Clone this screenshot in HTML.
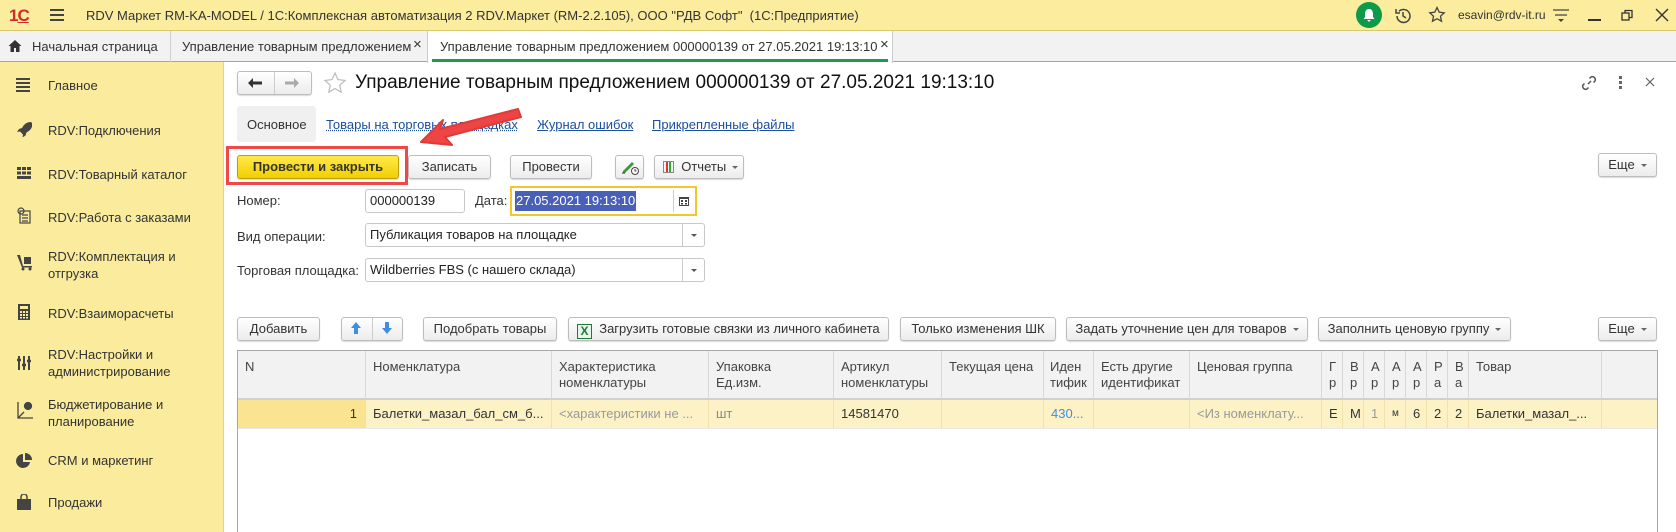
<!DOCTYPE html>
<html><head><meta charset="utf-8"><style>
*{box-sizing:border-box;margin:0;padding:0}
body{width:1676px;height:532px;overflow:hidden;background:#fff;font-family:"Liberation Sans",Arial,sans-serif;font-size:13px;color:#333;position:relative}
.a{position:absolute;white-space:nowrap}
.top{left:0;top:0;width:1676px;height:31px;background:#fbec9e;border-bottom:1px solid #d8c870}
.tabs{left:0;top:31px;width:1676px;height:31px;background:#f2f2f2;border-bottom:1px solid #a5a5a5}
.side{left:0;top:62px;width:224px;height:470px;background:#fbec9d;border-right:1px solid #e3d488}
.si{left:48px;font-size:13px;color:#333;line-height:17px}
.btn{position:absolute;height:24px;border:1px solid #bdbdbd;border-radius:3px;background:linear-gradient(#fff,#ececec);box-shadow:0 1px 1px rgba(0,0,0,.15);font-size:13px;line-height:22px;text-align:center;color:#333;white-space:nowrap}
.lnk{color:#1a4fa0;text-decoration:underline;font-size:13px}
.inp{position:absolute;height:24px;border:1px solid #c8c8c8;border-radius:3px;background:#fff;font-size:13px;line-height:22px;padding-left:4px;color:#222}
.dd{position:absolute;right:0;top:0;width:22px;height:22px;border-left:1px solid #ccc}
.dd:after{content:"";position:absolute;left:8px;top:10px;border:3px solid transparent;border-top:3px solid #555}
.tri{display:inline-block;border:3px solid transparent;border-top:3px solid #666;vertical-align:middle;margin-left:6px;margin-top:3px}
.th{position:absolute;top:351px;height:49px;background:#f2f2f2;border-right:1px solid #d8d8d8;border-bottom:2px solid #d0d0d0;font-size:13px;line-height:16px;padding:8px 0 0 7px;color:#444;overflow:hidden;white-space:nowrap}
.td{position:absolute;top:400px;height:28px;background:#fdf2c6;border-right:1px solid #f0e2a8;font-size:13px;line-height:28px;padding-left:7px;color:#333;overflow:hidden;white-space:nowrap}
</style></head><body>
<div class="a top"></div>
<div class="a" style="left:9px;top:6px;color:#d32b2b;font-weight:bold;font-size:17px;letter-spacing:-1px">1<span style="text-decoration:underline">С</span></div>
<div class="a" style="left:50px;top:9px;width:14px;height:2px;background:#444;box-shadow:0 5px 0 #444,0 10px 0 #444"></div>
<div class="a" style="left:86px;top:8px;font-size:13px;color:#333">RDV Маркет RM-KA-MODEL / 1С:Комплексная автоматизация 2 RDV.Маркет (RM-2.2.105), ООО "РДВ Софт"&nbsp; (1С:Предприятие)</div>
<div class="a" style="left:1356px;top:2px;width:26px;height:26px;border-radius:50%;background:#0e9a48"></div>
<svg class="a" style="left:1361px;top:7px" width="16" height="16" viewBox="0 0 16 16"><path d="M8 2c-3 0-4 2.5-4 5v3l-1.5 2h11L12 10V7c0-2.5-1-5-4-5z M6.5 13h3a1.5 1.5 0 0 1-3 0z" fill="#fff"/></svg>
<svg class="a" style="left:1393px;top:6px" width="20" height="20" viewBox="0 0 20 20" fill="none" stroke="#444" stroke-width="1.5"><path d="M4 10a6.5 6.5 0 1 0 2-4.7"/><path d="M3 3v4h4"/><path d="M10 6v4l3 2"/></svg>
<svg class="a" style="left:1427px;top:5px" width="20" height="20" viewBox="0 0 20 20"><path d="M10 2.5l2.2 4.7 5 .6-3.7 3.4 1 5-4.5-2.5-4.5 2.5 1-5L2.8 7.8l5-.6z" fill="none" stroke="#444" stroke-width="1.3"/></svg>
<div class="a" style="left:1458px;top:8px;font-size:12px;color:#333">esavin@rdv-it.ru</div>
<svg class="a" style="left:1552px;top:7px" width="18" height="18" viewBox="0 0 18 18"><path d="M1 3h16M3 8h12" stroke="#444" stroke-width="1.3"/><path d="M6 12h6l-3 3z" fill="#444"/></svg>
<div class="a" style="left:1588px;top:19px;width:13px;height:1.5px;background:#333"></div>
<svg class="a" style="left:1621px;top:9px" width="13" height="13" viewBox="0 0 13 13" fill="none" stroke="#333" stroke-width="1.3"><rect x="1" y="4" width="7" height="7"/><path d="M4 4V1.5h7v7H8"/></svg>
<svg class="a" style="left:1655px;top:8px" width="14" height="14" viewBox="0 0 14 14" stroke="#333" stroke-width="1.4"><path d="M1 1l12 12M13 1L1 13"/></svg>

<div class="a tabs"></div>
<svg class="a" style="left:8px;top:39px" width="14" height="14" viewBox="0 0 14 14"><path d="M7 1L0.5 7H2.5v6h3.5V9h2v4h3.5V7h2z" fill="#333"/></svg>
<div class="a" style="left:32px;top:39px">Начальная страница</div>
<div class="a" style="left:170px;top:31px;width:1px;height:31px;background:#d0d0d0"></div>
<div class="a" style="left:182px;top:39px">Управление товарным предложением</div>
<div class="a" style="left:413px;top:36px;font-size:15px;color:#333">×</div>
<div class="a" style="left:427px;top:31px;width:466px;height:32px;background:#fff;border-left:1px solid #ccc;border-right:1px solid #ccc"></div>
<div class="a" style="left:432px;top:59px;width:456px;height:3px;background:#1e9a4a"></div>
<div class="a" style="left:440px;top:39px">Управление товарным предложением 000000139 от 27.05.2021 19:13:10</div>
<div class="a" style="left:880px;top:36px;font-size:15px">×</div>

<div class="a side"></div>
<div class="a" style="left:16px;top:78px;width:14px;height:2px;background:#444;box-shadow:0 4px 0 #444,0 8px 0 #444,0 12px 0 #444"></div>
<div class="a si" style="top:77px">Главное</div>
<svg class="a" style="left:16px;top:121px" width="16" height="16" viewBox="0 0 16 16"><path d="M15 1c-4 0-7 2-9 6l-3 1-2 3 3-0.5 3 3-0.5 3 3-2 1-3c4-2 6-5 6-9z" fill="#444"/></svg>
<div class="a si" style="top:122px">RDV:Подключения</div>
<svg class="a" style="left:16px;top:166px" width="16" height="14" viewBox="0 0 16 14" fill="#444"><rect x="1" y="1" width="4" height="3"/><rect x="6" y="1" width="4" height="3"/><rect x="11" y="1" width="4" height="3"/><rect x="1" y="5.5" width="4" height="3"/><rect x="6" y="5.5" width="4" height="3"/><rect x="11" y="5.5" width="4" height="3"/><rect x="1" y="10" width="14" height="3"/></svg>
<div class="a si" style="top:166px">RDV:Товарный каталог</div>
<svg class="a" style="left:17px;top:207px" width="14" height="17" viewBox="0 0 14 17" fill="none" stroke="#444" stroke-width="1.2"><rect x="3" y="4" width="10" height="12"/><circle cx="4" cy="4" r="3"/><path d="M5 8h6M5 11h6M5 14h6"/></svg>
<div class="a si" style="top:209px">RDV:Работа с заказами</div>
<svg class="a" style="left:16px;top:253px" width="18" height="18" viewBox="0 0 18 18" fill="#444"><path d="M1 2l3 0 3 11h9v1.5H6z"/><rect x="8" y="4" width="7" height="7"/><circle cx="7" cy="16" r="1.5"/><circle cx="14" cy="16" r="1.5"/></svg>
<div class="a si" style="top:248px">RDV:Комплектация и<br>отгрузка</div>
<svg class="a" style="left:18px;top:304px" width="12" height="16" viewBox="0 0 12 16" fill="#444"><path d="M0 0h12v16H0z M2 2v3h8V2z" fill-rule="evenodd"/><g fill="#fbec9d"><rect x="2" y="7" width="2" height="2"/><rect x="5" y="7" width="2" height="2"/><rect x="8" y="7" width="2" height="2"/><rect x="2" y="10" width="2" height="2"/><rect x="5" y="10" width="2" height="2"/><rect x="8" y="10" width="2" height="2"/><rect x="2" y="13" width="2" height="1.5"/><rect x="5" y="13" width="2" height="1.5"/><rect x="8" y="13" width="2" height="1.5"/></g></svg>
<div class="a si" style="top:305px">RDV:Взаиморасчеты</div>
<svg class="a" style="left:17px;top:355px" width="14" height="16" viewBox="0 0 14 16" stroke="#444" stroke-width="2"><path d="M2 1v14M7 1v14M12 1v14"/><path d="M0 5h4M5 10h4M10 6h4" stroke-width="2.5"/></svg>
<div class="a si" style="top:346px">RDV:Настройки и<br>администрирование</div>
<svg class="a" style="left:16px;top:400px" width="18" height="20" viewBox="0 0 18 20" fill="none" stroke="#444" stroke-width="1.3"><path d="M2 2v16h15"/><path d="M2 18l6-6"/><circle cx="12" cy="6" r="3.5" fill="#444"/></svg>
<div class="a si" style="top:396px">Бюджетирование и<br>планирование</div>
<svg class="a" style="left:16px;top:453px" width="16" height="16" viewBox="0 0 16 16" fill="#444"><path d="M7 1a7 7 0 1 0 7 8H7z"/><path d="M9 0v7h7a7 7 0 0 0-7-7z"/></svg>
<div class="a si" style="top:452px">CRM и маркетинг</div>
<svg class="a" style="left:17px;top:494px" width="14" height="16" viewBox="0 0 14 16" fill="#444"><path d="M0 5h14v11H0z"/><path d="M4 6V3a3 3 0 0 1 6 0v3" fill="none" stroke="#444" stroke-width="1.5"/></svg>
<div class="a si" style="top:494px">Продажи</div>

<div class="btn" style="left:237px;top:71px;width:75px;height:24px"></div>
<div class="a" style="left:274px;top:72px;width:1px;height:22px;background:#ccc"></div>
<svg class="a" style="left:247px;top:76px" width="16" height="14" viewBox="0 0 16 14"><path d="M1 7l5-5v3.5h9v3H6V12z" fill="#333"/></svg>
<svg class="a" style="left:284px;top:76px" width="16" height="14" viewBox="0 0 16 14"><path d="M15 7l-5-5v3.5H1v3h9V12z" fill="#aaa"/></svg>
<svg class="a" style="left:323px;top:71px" width="24" height="24" viewBox="0 0 24 24"><path d="M12 2l3 6.6 7 .8-5.2 4.8 1.4 7L12 17.6l-6.2 3.6 1.4-7L2 9.4l7-.8z" fill="none" stroke="#bbb" stroke-width="1.2"/></svg>
<div class="a" style="left:355px;top:72px;font-size:19px;color:#111">Управление товарным предложением 000000139 от 27.05.2021 19:13:10</div>
<svg class="a" style="left:1580px;top:74px" width="18" height="18" viewBox="0 0 18 18" fill="none" stroke="#555" stroke-width="1.5"><path d="M8 10l3-3"/><path d="M9.5 4.5l1.5-1.5a3 3 0 0 1 4 4L13.5 8.5"/><path d="M8.5 13.5L7 15a3 3 0 0 1-4-4l1.5-1.5"/></svg>
<div class="a" style="left:1619px;top:76px;width:3px;height:3px;background:#666;box-shadow:0 5px 0 #666,0 10px 0 #666"></div>
<svg class="a" style="left:1645px;top:77px" width="10" height="10" viewBox="0 0 10 10" stroke="#666" stroke-width="1.2"><path d="M1 1l8 8M9 1L1 9"/></svg>

<div class="a" style="left:237px;top:106px;width:79px;height:36px;background:#f0f0f0;border-radius:3px"></div>
<div class="a" style="left:247px;top:117px">Основное</div>
<div class="a lnk" style="left:326px;top:117px;text-decoration:underline dotted">Товары на торговых площадках</div>
<div class="a lnk" style="left:537px;top:117px">Журнал ошибок</div>
<div class="a lnk" style="left:652px;top:117px">Прикрепленные файлы</div>

<div class="a" style="left:226px;top:146px;width:182px;height:39px;border:3px solid #f04848"></div>
<div class="btn" style="left:237px;top:155px;width:162px;background:linear-gradient(#ffe94a,#f1d000);border-color:#bfa000;font-weight:bold;color:#333">Провести и закрыть</div>
<div class="btn" style="left:408px;top:155px;width:83px">Записать</div>
<div class="btn" style="left:510px;top:155px;width:82px">Провести</div>
<div class="btn" style="left:615px;top:155px;width:29px"></div>
<svg class="a" style="left:620px;top:158px" width="20" height="18" viewBox="0 0 20 18"><path d="M3 13l9-9 2 2-9 9H3z" fill="#3a9a3a"/><path d="M2 15h3" stroke="#333"/><circle cx="15" cy="13" r="3.5" fill="#fff" stroke="#444"/><path d="M15 11v2h1.5" stroke="#444" fill="none"/></svg>
<div class="btn" style="left:654px;top:155px;width:90px;text-align:left;padding-left:8px"><span style="display:inline-block;width:11px;height:12px;border:1px solid #888;vertical-align:-2px;background:linear-gradient(90deg,transparent 2px,#d33 2px,#d33 4px,transparent 4px,transparent 5px,#3a3 5px,#3a3 7px,transparent 7px)"></span>&nbsp; Отчеты<span class="tri"></span></div>
<div class="btn" style="left:1598px;top:153px;width:59px">Еще<span class="tri"></span></div>

<div class="a" style="left:237px;top:193px">Номер:</div>
<div class="inp" style="left:365px;top:189px;width:100px">000000139</div>
<div class="a" style="left:475px;top:193px">Дата:</div>
<div class="a" style="left:510px;top:186px;width:187px;height:30px;border:2px solid #f4c62a"></div>
<div class="a" style="left:515px;top:191px;width:121px;height:20px;background:#4860b8"></div>
<div class="a" style="left:516px;top:193px;color:#fff">27.05.2021 19:13:10</div>
<div class="a" style="left:673px;top:190px;width:1px;height:22px;background:#ccc"></div>
<svg class="a" style="left:679px;top:196px" width="10" height="10" viewBox="0 0 10 10" fill="#444"><path d="M0 1h10v9H0z M1 3v6h8V3z" fill-rule="evenodd"/><rect x="2" y="4" width="2" height="2"/><rect x="6" y="4" width="2" height="2"/><rect x="2" y="7" width="2" height="1.5"/><rect x="6" y="7" width="2" height="1.5"/></svg>

<div class="a" style="left:237px;top:229px">Вид операции:</div>
<div class="inp" style="left:365px;top:223px;width:340px">Публикация товаров на площадке<div class="dd"></div></div>
<div class="a" style="left:237px;top:263px">Торговая площадка:</div>
<div class="inp" style="left:365px;top:258px;width:340px">Wildberries FBS (с нашего склада)<div class="dd"></div></div>

<div class="btn" style="left:237px;top:317px;width:83px">Добавить</div>
<div class="btn" style="left:341px;top:317px;width:62px"></div>
<div class="a" style="left:372px;top:318px;width:1px;height:22px;background:#ccc"></div>
<svg class="a" style="left:350px;top:321px" width="12" height="14" viewBox="0 0 12 14"><path d="M6 1L1 7h3v6h4V7h3z" fill="#3f8fe0"/></svg>
<svg class="a" style="left:381px;top:321px" width="12" height="14" viewBox="0 0 12 14"><path d="M6 13L1 7h3V1h4v6h3z" fill="#3f8fe0"/></svg>
<div class="btn" style="left:423px;top:317px;width:134px">Подобрать товары</div>
<div class="btn" style="left:568px;top:317px;width:321px;text-align:left;padding-left:8px"><span style="display:inline-block;width:15px;height:15px;border:1px solid #1f7a3a;background:#e8f5ea;color:#1f7a3a;font-weight:bold;font-size:12px;line-height:13px;text-align:center;vertical-align:-2px">X</span>&nbsp; Загрузить готовые связки из личного кабинета</div>
<div class="btn" style="left:900px;top:317px;width:156px">Только изменения ШК</div>
<div class="btn" style="left:1066px;top:317px;width:242px">Задать уточнение цен для товаров<span class="tri"></span></div>
<div class="btn" style="left:1318px;top:317px;width:193px">Заполнить ценовую группу<span class="tri"></span></div>
<div class="btn" style="left:1598px;top:317px;width:59px">Еще<span class="tri"></span></div>

<div class="a" style="left:237px;top:350px;width:1421px;height:182px;border:1px solid #a8a8a8;border-bottom:none"></div>
<div class="th" style="left:238px;width:128px">N</div>
<div class="th" style="left:366px;width:186px">Номенклатура</div>
<div class="th" style="left:552px;width:157px">Характеристика<br>номенклатуры</div>
<div class="th" style="left:709px;width:125px">Упаковка<br>Ед.изм.</div>
<div class="th" style="left:834px;width:108px">Артикул<br>номенклатуры</div>
<div class="th" style="left:942px;width:102px">Текущая цена</div>
<div class="th" style="left:1044px;width:50px;padding-left:6px">Иден<br>тифик</div>
<div class="th" style="left:1094px;width:96px">Есть другие<br>идентификат</div>
<div class="th" style="left:1190px;width:132px">Ценовая группа</div>
<div class="th" style="left:1322px;width:21px">Г<br>р</div>
<div class="th" style="left:1343px;width:21px">В<br>р</div>
<div class="th" style="left:1364px;width:21px">А<br>р</div>
<div class="th" style="left:1385px;width:21px">А<br>р</div>
<div class="th" style="left:1406px;width:21px">А<br>р</div>
<div class="th" style="left:1427px;width:21px">Р<br>а</div>
<div class="th" style="left:1448px;width:21px">В<br>а</div>
<div class="th" style="left:1469px;width:133px">Товар</div>
<div class="th" style="left:1602px;width:55px;border-right:none"></div>

<div class="td" style="left:238px;width:128px;background:#fbe491;text-align:right;padding-right:8px">1</div>
<div class="td" style="left:366px;width:186px">Балетки_мазал_бал_см_б...</div>
<div class="td" style="left:552px;width:157px;color:#999">&lt;характеристики не ...</div>
<div class="td" style="left:709px;width:125px;color:#888">шт</div>
<div class="td" style="left:834px;width:108px">14581470</div>
<div class="td" style="left:942px;width:102px"></div>
<div class="td" style="left:1044px;width:50px;color:#3a8ee8">430...</div>
<div class="td" style="left:1094px;width:96px"></div>
<div class="td" style="left:1190px;width:132px;color:#999">&lt;Из номенклату...</div>
<div class="td" style="left:1322px;width:21px">Е</div>
<div class="td" style="left:1343px;width:21px">М</div>
<div class="td" style="left:1364px;width:21px;color:#999">1</div>
<div class="td" style="left:1385px;width:21px;font-size:10px">м</div>
<div class="td" style="left:1406px;width:21px">6</div>
<div class="td" style="left:1427px;width:21px">2</div>
<div class="td" style="left:1448px;width:21px">2</div>
<div class="td" style="left:1469px;width:133px">Балетки_мазал_...</div>
<div class="td" style="left:1602px;width:55px;border-right:none"></div>
<div class="a" style="left:238px;top:428px;width:1419px;height:1px;background:#e8e8e8"></div>

<svg class="a" style="left:390px;top:95px" width="140" height="60" viewBox="0 0 140 60"><path d="M128 14 L50 34 L53 25 L31 47 L62 50 L55 42 L131 22 Z" fill="#ee4444" stroke="#e03a3a" stroke-width="2" stroke-linejoin="round"/></svg>
</body></html>
